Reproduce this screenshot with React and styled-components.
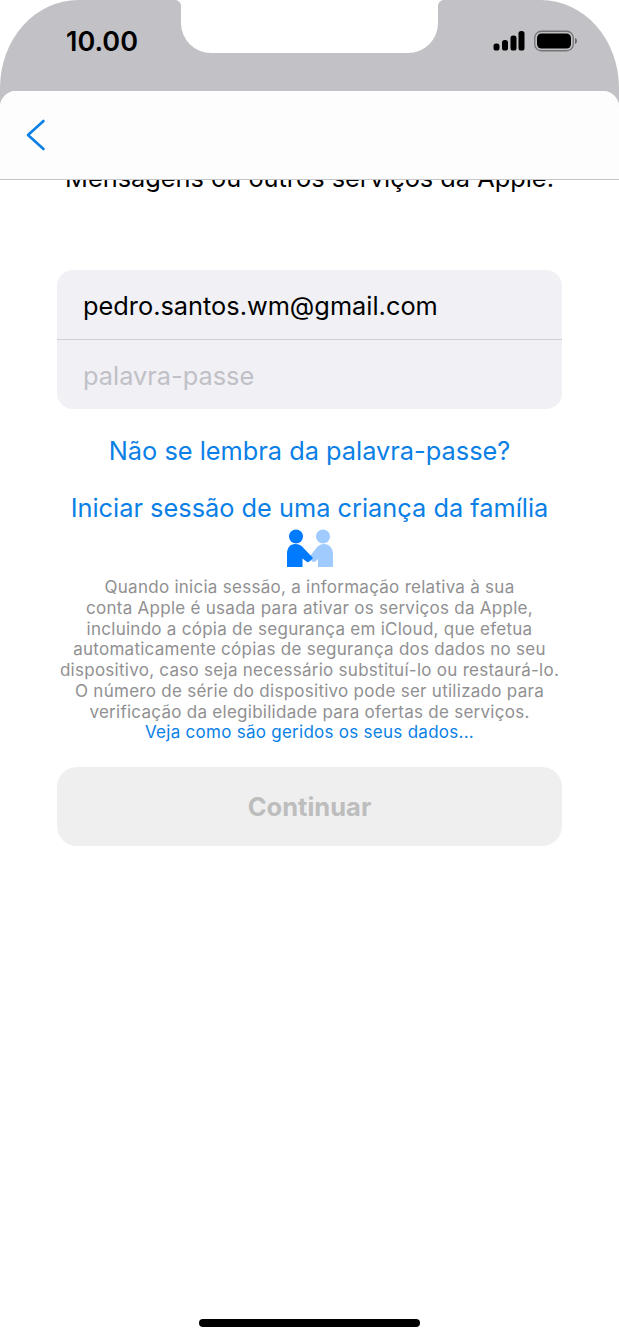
import React from "react";
import styled, { createGlobalStyle } from "styled-components";

const Global = createGlobalStyle`
  html, body {
    margin: 0;
    padding: 0;
    background: #fff;
  }
  * {
    box-sizing: border-box;
  }
`;

const App = () => {
  return (
    <Phone>
      <Global />

      <StatusBar>
        <Notch />
        <Time>10.00</Time>
        <StatusIcons>
          <svg width="32" height="20" viewBox="0 0 32 20">
            <rect x="0.5" y="12.5" width="6" height="7" rx="2.6" fill="#000" />
            <rect x="9" y="9" width="6" height="10.5" rx="2.6" fill="#000" />
            <rect x="17.5" y="4.5" width="6" height="15" rx="2.6" fill="#000" />
            <rect x="25.5" y="0" width="6" height="19.5" rx="2.6" fill="#000" />
          </svg>
          <svg width="44" height="22" viewBox="0 0 44 22">
            <rect x="0.75" y="1.25" width="38.5" height="19.5" rx="6.5" fill="none" stroke="#000" strokeOpacity="0.4" strokeWidth="1.3" />
            <rect x="3" y="3.5" width="34" height="15" rx="4.5" fill="#000" />
            <path d="M41 8v6c1.3-.4 2-1.6 2-3s-.7-2.6-2-3z" fill="#000" fillOpacity="0.45" />
          </svg>
        </StatusIcons>
      </StatusBar>

      <Sheet>
        <NavBar>
          <svg width="22" height="32" viewBox="0 0 22 32">
            <path d="M18.5 2 L3 16 L18.5 30" fill="none" stroke="#0a7fe6" strokeWidth="2.6" strokeLinecap="round" strokeLinejoin="round" />
          </svg>
        </NavBar>

        <Content>
          <Intro>Mensagens ou outros serviços da Apple.</Intro>

          <Fields>
            <Field>pedro.santos.wm@gmail.com</Field>
            <Field $placeholder>palavra-passe</Field>
          </Fields>

          <BigLink $top={27}>Não se lembra da palavra-passe?</BigLink>
          <BigLink $top={27}>Iniciar sessão de uma criança da família</BigLink>

          <FamilyIcon>
            <svg width="50" height="40" viewBox="0 0 50 40">
              <circle cx="11" cy="7.5" r="7" fill="#007aff" />
              <circle cx="38" cy="7.5" r="7" fill="#a0cbff" />
              <path d="M39 15c5 0 9 4 9 10v13H33v-8l-2 2c-1 1-2.500 1.500-3.500.5l-4-3.500 7.500-9.500c2-3 4.500-4.500 8-4.500z" fill="#a0cbff" />
              <path d="M10 15c-5 0-8 4-8 10v13h15.500v-8.500l4.500 3.500c1 .5 2 0 3-1l3-3-9.500-10c-2-2.500-4.500-4-8.500-4z" fill="#007aff" />
            </svg>
          </FamilyIcon>

          <Legal>
            Quando inicia sessão, a informação relativa à sua
            <br />
            conta Apple é usada para ativar os serviços da Apple,
            <br />
            incluindo a cópia de segurança em iCloud, que efetua
            <br />
            automaticamente cópias de segurança dos dados no seu
            <br />
            dispositivo, caso seja necessário substituí-lo ou restaurá-lo.
            <br />
            O número de série do dispositivo pode ser utilizado para
            <br />
            verificação da elegibilidade para ofertas de serviços.
            <br />
            <LegalLink>Veja como são geridos os seus dados...</LegalLink>
          </Legal>

          <ContinueButton>Continuar</ContinueButton>
        </Content>
      </Sheet>

      <HomeBar />
    </Phone>
  );
};

export default App;

const Phone = styled.div`
  width: 619px;
  height: 1340px;

  position: relative;
  overflow: hidden;

  display: flex;
  flex-direction: column;

  background: #fff;
  font-family: Inter, "Liberation Sans", sans-serif;
`;

const StatusBar = styled.div`
  height: 107px;
  flex-shrink: 0;
  margin-bottom: -16px;

  position: relative;

  display: flex;
  align-items: center;
  justify-content: space-between;

  padding: 0 41px 25px 66px;

  background: #c2c1c5;
  border-radius: 78px 78px 0 0 / 88px 88px 0 0;
`;

const Notch = styled.div`
  position: absolute;
  top: 0;
  left: 181px;

  width: 257px;
  height: 53px;

  background: #fff;
  border-radius: 0 0 30px 30px;

  &::before,
  &::after {
    content: "";
    position: absolute;
    top: 0;
    width: 6px;
    height: 6px;
  }

  &::before {
    left: -6px;
    background: radial-gradient(circle at 0 100%, transparent 5.5px, #fff 6.5px);
  }

  &::after {
    right: -6px;
    background: radial-gradient(circle at 100% 100%, transparent 5.5px, #fff 6.5px);
  }
`;

const Time = styled.div`
  font-size: 27px;
  font-weight: 600;
  color: #000;
`;

const StatusIcons = styled.div`
  display: flex;
  align-items: center;
  gap: 9px;
`;

const Sheet = styled.div`
  flex: 1;
  min-height: 0;

  position: relative;

  background: #fff;
  border-radius: 16px 16px 0 0;
  overflow: hidden;
`;

const NavBar = styled.div`
  height: 89px;

  position: relative;
  z-index: 2;

  display: flex;
  align-items: center;

  padding: 0 0 1px 25px;

  background: #fdfdfd;
  border-bottom: 1px solid #c6c6c8;
`;

const Content = styled.div`
  padding: 0 57px;
`;

const Intro = styled.div`
  margin-top: -17px;

  font-size: 25.35px;
  line-height: 30px;
  color: #000;
  text-align: center;
  white-space: nowrap;
`;

const Fields = styled.div`
  margin-top: 77px;

  background: #f0f0f5;
  border-radius: 16px;
  overflow: hidden;
`;

const Field = styled.div`
  height: 69px;
  padding: 2px 0 0 26px;

  display: flex;
  align-items: center;

  font-size: 25.35px;
  color: ${(p) => (p.$placeholder ? "#c0c0c6" : "#000")};

  & + & {
    height: 70px;
    padding-top: 2px;
    border-top: 1px solid #d0d0d5;
  }
`;

const BigLink = styled.div`
  margin-top: ${(p) => p.$top}px;

  font-size: 25.35px;
  line-height: 30px;
  color: #0a7fe6;
  text-align: center;
  white-space: nowrap;
`;

const FamilyIcon = styled.div`
  height: 40px;
  margin-top: 6px;

  display: flex;
  justify-content: center;
`;

const Legal = styled.div`
  margin: 8px -10px 0;

  font-size: 17px;
  letter-spacing: 0.27px;
  line-height: 20.75px;
  color: #909092;
  text-align: center;
  white-space: nowrap;
`;

const LegalLink = styled.span`
  color: #0a7fe6;
`;

const ContinueButton = styled.div`
  height: 79px;
  margin-top: 24px;

  display: flex;
  align-items: center;
  justify-content: center;

  background: #efefef;
  border-radius: 20px;

  font-size: 25.5px;
  font-weight: 700;
  color: #bdbdbd;
`;

const HomeBar = styled.div`
  position: absolute;
  left: 199px;
  bottom: 13px;

  width: 221px;
  height: 8px;

  background: #000;
  border-radius: 4px;
`;
